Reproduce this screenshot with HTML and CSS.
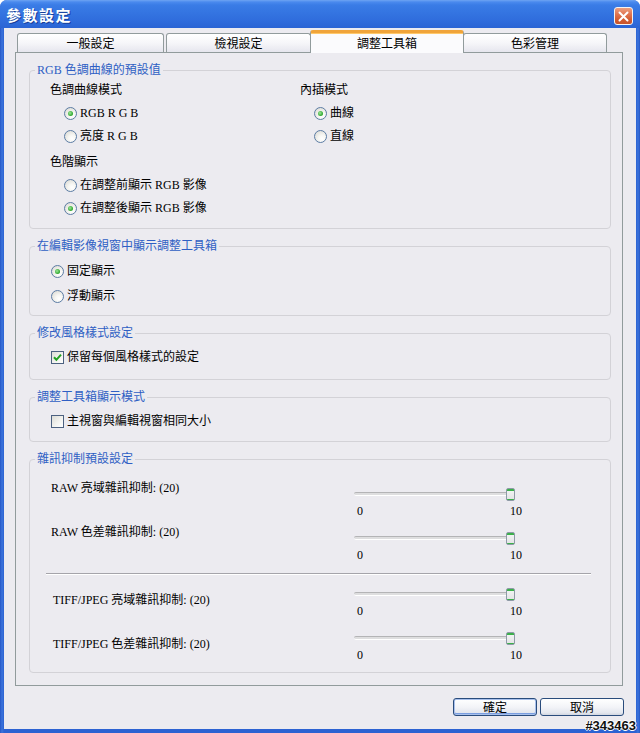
FILE: index.html
```html
<!DOCTYPE html>
<html lang="zh-Hant">
<head>
<meta charset="utf-8">
<title>參數設定</title>
<link rel="stylesheet" href="styles.css">
</head>
<body>
<div class="window">
  <div class="titlebar">
    <span class="title">參數設定</span>
    <span class="close" aria-label="關閉">
      <svg width="11" height="11" viewBox="0 0 11 11"><path d="M1.5 1.5 L9.5 9.5 M9.5 1.5 L1.5 9.5" stroke="#fff" stroke-width="2" stroke-linecap="round"/></svg>
    </span>
  </div>
  <div class="client">
    <div class="tabs">
      <div class="tab t1">一般設定</div>
      <div class="tab t2">檢視設定</div>
      <div class="tab sel">調整工具箱</div>
      <div class="tab t4">色彩管理</div>
    </div>
    <div class="panel">
      <fieldset class="group g1">
        <legend>RGB 色調曲線的預設值</legend>
        <div class="cols">
          <div class="col left">
            <div class="hdr">色調曲線模式</div>
            <div class="opt"><span class="radio on"></span>RGB R G B</div>
            <div class="opt"><span class="radio"></span>亮度 R G B</div>
            <div class="hdr second">色階顯示</div>
            <div class="opt"><span class="radio"></span>在調整前顯示 RGB 影像</div>
            <div class="opt"><span class="radio on"></span>在調整後顯示 RGB 影像</div>
          </div>
          <div class="col right">
            <div class="hdr">內插模式</div>
            <div class="opt"><span class="radio on"></span>曲線</div>
            <div class="opt"><span class="radio"></span>直線</div>
          </div>
        </div>
      </fieldset>

      <fieldset class="group g2">
        <legend>在編輯影像視窗中顯示調整工具箱</legend>
        <div class="opt"><span class="radio on"></span>固定顯示</div>
        <div class="opt"><span class="radio"></span>浮動顯示</div>
      </fieldset>

      <fieldset class="group g3">
        <legend>修改風格樣式設定</legend>
        <div class="opt"><span class="check"><svg width="11" height="11" viewBox="0 0 11 11"><path d="M2 5.2 L4.4 7.8 L9 2.6" fill="none" stroke="#21a121" stroke-width="2"/></svg></span>保留每個風格樣式的設定</div>
      </fieldset>

      <fieldset class="group g4">
        <legend>調整工具箱顯示模式</legend>
        <div class="opt"><span class="check"></span>主視窗與編輯視窗相同大小</div>
      </fieldset>

      <fieldset class="group g5">
        <legend>雜訊抑制預設設定</legend>
        <div class="nrow r1">
          <div class="nlabel">RAW 亮域雜訊抑制: (20)</div>
          <div class="slider">
            <div class="track-row"><span class="track"></span><span class="thumb"></span></div>
            <div class="scale"><span>0</span><span>10</span></div>
          </div>
        </div>
        <div class="nrow r2">
          <div class="nlabel">RAW 色差雜訊抑制: (20)</div>
          <div class="slider">
            <div class="track-row"><span class="track"></span><span class="thumb"></span></div>
            <div class="scale"><span>0</span><span>10</span></div>
          </div>
        </div>
        <div class="sep"></div>
        <div class="nrow low r3">
          <div class="nlabel">TIFF/JPEG 亮域雜訊抑制: (20)</div>
          <div class="slider">
            <div class="track-row"><span class="track"></span><span class="thumb"></span></div>
            <div class="scale"><span>0</span><span>10</span></div>
          </div>
        </div>
        <div class="nrow low r4">
          <div class="nlabel">TIFF/JPEG 色差雜訊抑制: (20)</div>
          <div class="slider">
            <div class="track-row"><span class="track"></span><span class="thumb"></span></div>
            <div class="scale"><span>0</span><span>10</span></div>
          </div>
        </div>
      </fieldset>
    </div>
    <div class="buttons">
      <button class="btn default">確定</button>
      <button class="btn">取消</button>
    </div>
  </div>
  <div class="watermark">#343463</div>
</div>
</body>
</html>
```

FILE: styles.css
```css
* { box-sizing: border-box; }

html, body {
  margin: 0;
  padding: 0;
  width: 640px;
  height: 733px;
  overflow: hidden;
  background: #ffffff;
}

body {
  font-family: "Liberation Serif", "Noto Sans CJK TC", serif;
  font-size: 12px;
  font-weight: 400;
  color: #000;
}

.window {
  position: relative;
  width: 640px;
  height: 733px;
  display: flex;
  flex-direction: column;
  background: linear-gradient(to right, #2656c6 0, #3c74dc 2px, #2c62d2 4px, #2c62d2 636px, #3c74dc 638px, #2656c6 640px);
  border-radius: 7px 7px 0 0;
  overflow: hidden;
}

/* ---------- title bar ---------- */
.titlebar {
  height: 28px;
  flex: none;
  display: flex;
  justify-content: space-between;
  align-items: flex-start;
  padding: 0 7px 0 6px;
  background: linear-gradient(#6ea4f2 0, #4a8aee 2px, #3a7ce6 5px, #3576e2 40%, #2f6cdc 75%, #2a64d4 100%);
}

.title {
  font-family: "Noto Sans CJK TC", sans-serif;
  font-weight: bold;
  font-size: 15px;
  line-height: 28px;
  letter-spacing: 1.5px;
  color: #fff;
  text-shadow: 1px 1px 0 #173f9a;
  padding-top: 1px;
}

.close {
  width: 19px;
  height: 18px;
  margin-top: 7px;
  border: 1px solid #f4f4f4;
  border-radius: 3px;
  background: linear-gradient(#ec9f80, #e07450 40%, #d05a30 75%, #c8542c);
  display: grid;
  place-items: center;
}

/* ---------- client area ---------- */
.client {
  flex: 1;
  margin: 0 4px 4px;
  background: #ecebf0;
  display: flex;
  flex-direction: column;
}

.tabs {
  height: 22px;
  margin-top: 2px;
  padding-left: 13px;
  display: flex;
  align-items: flex-end;
  flex: none;
}

.tab {
  height: 19px;
  border: 1px solid #919b9c;
  border-bottom: none;
  border-radius: 3px 3px 0 0;
  background: linear-gradient(#ffffff, #f6f6f9 50%, #e6e6ee);
  font-family: "Noto Sans CJK TC", sans-serif;
  font-size: 12px;
  line-height: 18px;
  text-align: center;
}

.t1 { width: 147px; }
.t2 { width: 145px; margin-left: 2px; }
.t4 { width: 144px; margin-left: -1px; }

.tab.sel {
  position: relative;
  z-index: 1;
  width: 154px;
  height: 23px;
  margin-left: -1px;
  margin-bottom: -1px;
  border-top: 3px solid #f0a43a;
  background: #fbfbfd;
  line-height: 19px;
  box-shadow: inset 0 1px 0 #ffc86a;
}

.panel {
  height: 634px;
  margin: 0 13px 0 11px;
  border: 1px solid #919b9c;
  background: #ecebf0;
  padding: 10px 11px 0 13px;
  flex: none;
}

/* ---------- group boxes ---------- */
.group {
  margin: 0 0 10px;
  padding: 0;
  min-width: 0;
  border: 1px solid #d3d2d7;
  border-radius: 4px;
}

.group legend {
  margin-left: 5px;
  padding: 0 2px;
  line-height: 14px;
  font-size: 12px;
  color: #2f5fc4;
}

.g1 { height: 166px; }
.g2 { height: 77px; padding-top: 10px; }
.g3 { height: 54px; padding-top: 9px; }
.g4 { height: 52px; padding-top: 9px; }
.g5 { height: 221px; padding-top: 15px; }

.group > .opt,
.group > .nrow {
  margin-left: 21px;
}

.cols {
  display: flex;
  padding: 5px 0 0 20px;
}

.col.left { width: 250px; }

.hdr {
  height: 16px;
  line-height: 16px;
}

.hdr.second { margin-top: 10px; }

.opt {
  height: 16px;
  display: flex;
  align-items: center;
  gap: 3px;
  line-height: 16px;
  white-space: nowrap;
}

.col .opt {
  margin-top: 7px;
  padding-left: 14px;
}

.g2 .opt + .opt { margin-top: 9px; }

/* radio */
.radio {
  flex: none;
  width: 13px;
  height: 13px;
  border: 1px solid #5b7ca4;
  border-radius: 50%;
  background: radial-gradient(circle at 65% 70%, #ffffff 0, #f6f6f3 35%, #dddcd6 85%);
  display: grid;
  place-items: center;
}

.radio.on::after {
  content: "";
  width: 5px;
  height: 5px;
  border-radius: 50%;
  background: radial-gradient(circle at 40% 40%, #9ee69a, #2aa52a 70%);
}

/* checkbox */
.check {
  flex: none;
  width: 13px;
  height: 13px;
  border: 1px solid #4c6180;
  background: linear-gradient(135deg, #dcdcd6, #f4f4f1 60%, #ffffff);
  display: grid;
  place-items: center;
}

.check svg { display: block; }

/* ---------- noise sliders ---------- */
.nrow {
  display: flex;
  align-items: flex-start;
}

.nlabel {
  width: 303px;
  line-height: 14px;
  white-space: nowrap;
}

.nrow .slider { margin-top: 6px; }
.nrow.low .slider { margin-top: 0; }
.nrow.low .nlabel { margin-top: 6px; padding-left: 2px; }

.r2 { margin-top: 7px; }
.r3 { margin-top: 12px; }
.r4 { margin-top: 13px; }
.r4 .nlabel { margin-top: 5px; }

.slider {
  width: 168px;
}

.track-row {
  height: 14px;
  display: flex;
  align-items: center;
}

.track {
  flex: none;
  width: 153px;
  height: 4px;
  border-radius: 2px 0 0 2px;
  border-top: 1px solid #b4b4b6;
  border-bottom: 1px solid #ffffff;
  background: #dededf;
}

.thumb {
  flex: none;
  width: 9px;
  height: 13px;
  margin-left: -1px;
  border: 1px solid #8e9aa6;
  border-radius: 2px;
  background: linear-gradient(#3bb04a 0, #3bb04a 2px, #f2f3f3 2px, #e3e4e6 10px, #3bb04a 10px, #3bb04a 11px);
}

.scale {
  display: flex;
  justify-content: space-between;
  padding-left: 3px;
  margin-top: 3px;
  line-height: 14px;
}

.sep {
  margin: 11px 19px 0 16px;
  border-top: 1px solid #a5a4aa;
  border-bottom: 1px solid #ffffff;
}

/* ---------- buttons ---------- */
.buttons {
  display: flex;
  justify-content: flex-end;
  gap: 3px;
  margin-top: 12px;
  padding-right: 12px;
}

.btn {
  width: 84px;
  height: 18px;
  padding: 0;
  border: 1px solid #2a4c7c;
  border-radius: 3px;
  background: linear-gradient(#ffffff, #f3f4f8 50%, #e4e7ee 85%, #d2d6e0);
  font-family: "Noto Sans CJK TC", sans-serif;
  font-size: 12px;
  line-height: 16px;
  color: #000;
}

.btn.default {
  box-shadow: inset 0 0 0 1px #a8c0ec, inset 0 -1px 0 1px #7a9ee0;
}

/* ---------- watermark ---------- */
.watermark {
  position: absolute;
  right: 4px;
  bottom: 1px;
  font-family: "Liberation Sans", sans-serif;
  font-weight: bold;
  font-size: 13px;
  line-height: 13px;
  color: #111;
  text-shadow: 1px 0 0 #fff, -1px 0 0 #fff, 0 1px 0 #fff, 0 -1px 0 #fff;
}
```
